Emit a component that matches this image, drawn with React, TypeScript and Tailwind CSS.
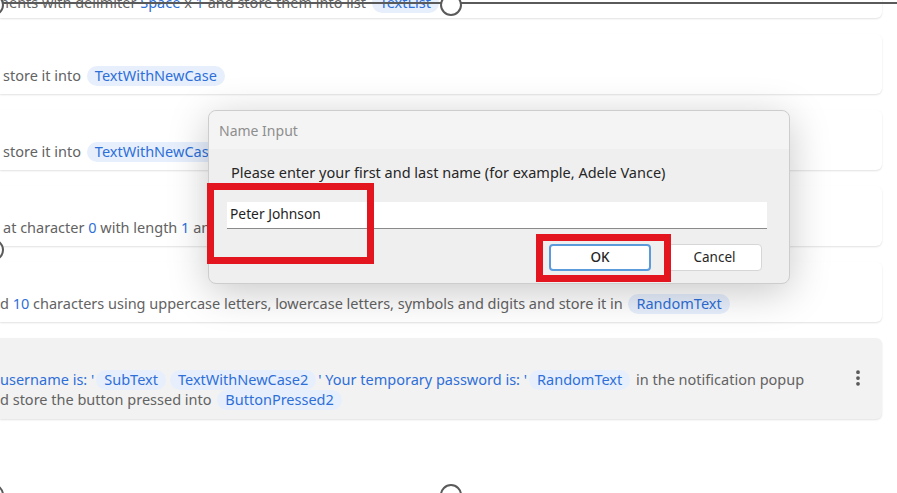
import React from "react";
import { EllipsisVertical } from "lucide-react";

const Var = ({ children }: { children: React.ReactNode }) => (
  <span className="text-[#2e6fd8]">{children}</span>
);

const Chip = ({ children }: { children: React.ReactNode }) => (
  <span className="mx-[2px] inline-flex h-[20px] items-center rounded-full bg-[#e7effd] px-[8px] text-[#2e6fd8]">
    {children}
  </span>
);

interface CardProps {
  children: React.ReactNode;
  selected?: boolean;
  first?: boolean;
}

const Card: React.FC<CardProps> = ({ children, selected, first }) => {
  return (
    <div
      className={
        selected
          ? "relative h-[81px] w-[882px] flex-shrink-0 rounded-r-[6px] bg-[#f2f2f2] pt-[32px] shadow-[0_1px_2px_rgba(0,0,0,0.12)]"
          : first
          ? "relative h-[60px] w-[882px] flex-shrink-0 rounded-r-[6px] bg-white pt-[35px] shadow-[0_1px_2px_rgba(0,0,0,0.12)]"
          : "relative h-[60px] w-[882px] flex-shrink-0 rounded-r-[6px] bg-white pt-[32px] shadow-[0_1px_2px_rgba(0,0,0,0.12)]"
      }
    >
      {children}
    </div>
  );
};

const Line = ({ children, pl = "" }: { children: React.ReactNode; pl?: string }) => (
  <div className={"flex h-[20px] items-center whitespace-pre text-[14.5px] text-[#636363] " + pl}>
    {children}
  </div>
);

const Handle = ({ className }: { className: string }) => (
  <div
    className={
      "absolute h-[22px] w-[22px] rounded-full border-2 border-[#5a5a5a] bg-white " + className
    }
  />
);

export default function App() {
  return (
    <div className="relative h-[493px] w-[897px] overflow-hidden bg-white font-['Segoe_UI','Noto_Sans',sans-serif]">
      {/* Flow steps list */}
      <div className="-mt-[42px] flex flex-col gap-[16px]">
        <Card first>
          <Line>
            nents with delimiter <Var>Space</Var> x <Var>1</Var> and store them into list <Chip>TextList</Chip>
          </Line>
        </Card>
        <Card>
          <Line pl="pl-[3px]">
            store it into <Chip>TextWithNewCase</Chip>
          </Line>
        </Card>
        <Card>
          <Line pl="pl-[3px]">
            store it into <Chip>TextWithNewCase2</Chip>
          </Line>
        </Card>
        <Card>
          <Line pl="pl-[3px]">
            at character <Var>0</Var> with length <Var>1</Var> and store it into <Chip>SubText</Chip>
          </Line>
        </Card>
        <Card>
          <Line>
            d <Var>10</Var> characters using uppercase letters, lowercase letters, symbols and digits and store it in <Chip>RandomText</Chip>
          </Line>
        </Card>
        <Card selected>
          <Line>
            <Var>username is: '</Var>
            <Chip>SubText</Chip>
            <Chip>TextWithNewCase2</Chip>
            <Var>' Your temporary password is: '</Var>
            <Chip>RandomText</Chip> in the notification popup
          </Line>
          <Line>
            d store the button pressed into <Chip>ButtonPressed2</Chip>
          </Line>
          <div className="absolute right-[14px] top-[30px] text-[#555]">
            <EllipsisVertical size={20} strokeWidth={2.5} />
          </div>
        </Card>
      </div>

      {/* Name Input dialog */}
      <div className="absolute left-[208px] top-[110px] h-[174px] w-[582px] rounded-[8px] border border-[#cdcdcd] bg-[#efefef] shadow-[0_8px_40px_rgba(0,0,0,0.22)]">
        <div className="flex h-[38px] items-center rounded-t-[8px] bg-[#f4f4f4] pl-[10px] text-[14px] text-[#8e8e8e]">
          Name Input
        </div>
        <div className="pl-[22px] pt-[13px] text-[14.5px] text-[#262626]">
          Please enter your first and last name (for example, Adele Vance)
        </div>
        <div className="ml-[18px] mt-[18px] flex h-[27px] w-[540px] items-center border-b border-[#8a8a8a] bg-white pl-[3px] text-[13.8px] text-[#1f1f1f]">
          Peter Johnson
        </div>
        <div className="mr-[27px] mt-[15px] flex justify-end gap-[16px]">
          <button className="flex h-[27px] w-[102px] items-center justify-center rounded-[4px] border-2 border-[#5b9bdc] bg-white text-[13.5px] font-medium text-[#262626]">
            OK
          </button>
          <button className="flex h-[27px] w-[95px] items-center justify-center rounded-[4px] border border-[#d6d6d6] bg-white text-[13.5px] text-[#262626]">
            Cancel
          </button>
        </div>

        {/* Red highlight boxes */}
        <div className="absolute left-[-2px] top-[72px] h-[81px] w-[167px] border-[7px] border-[#e3161f]" />
        <div className="absolute left-[327px] top-[123px] h-[48px] w-[135px] border-[7px] border-[#e3161f]" />
      </div>

      {/* Selection frame */}
      <div className="absolute left-0 right-0 top-[2px] h-[1.5px] bg-[#5a5a5a]" />
      <Handle className="left-[-18px] top-[-6px]" />
      <Handle className="left-[440px] top-[-6px]" />
      <Handle className="left-[-18px] top-[239px]" />
      <Handle className="left-[-18px] top-[484px]" />
      <Handle className="left-[440px] top-[484px]" />
    </div>
  );
}
